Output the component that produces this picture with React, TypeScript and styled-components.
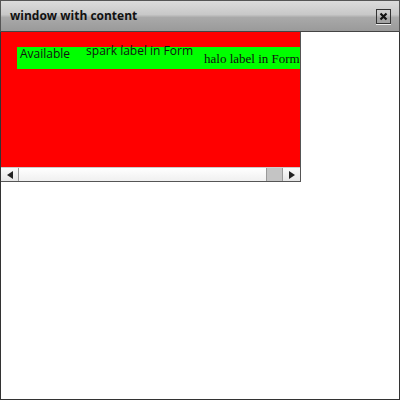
import React from "react";
import styled, { createGlobalStyle } from "styled-components";

const Global = createGlobalStyle`
  html, body { margin: 0; padding: 0; background: #fff; }
  #root { width: 400px; height: 400px; }
`;

const Window = styled.div`
  box-sizing: border-box;
  width: 400px;
  height: 400px;
  border: 1px solid #333;
  border-top: none;
  display: flex;
  flex-direction: column;
  background: #fff;
`;

const TitleBar = styled.div`
  box-sizing: border-box;
  height: 32px;
  flex: none;
  display: flex;
  align-items: center;
  justify-content: space-between;
  padding: 0 8px 0 9px;
  background: linear-gradient(#dcdcdc, #c8c8c8 45%, #a9a9a9 55%, #9a9a9a);
  border-top: 1px solid #555;
  border-bottom: 1px solid #444;
  margin: 0 -1px;
  border-left: 1px solid #555;
  border-right: 1px solid #555;
`;

const Title = styled.span`
  font-family: "Open Sans", sans-serif;
  font-weight: 700;
  font-size: 12px;
  color: #111;
  margin-top: -1px;
`;

const CloseButton = styled.div`
  box-sizing: border-box;
  width: 15px;
  height: 15px;
  border: 1px solid #333;
  display: flex;
  align-items: center;
  justify-content: center;
  box-shadow: 0 1px 0 #eee;
`;

const Scroller = styled.div`
  width: 299px;
  display: flex;
  flex-direction: column;
  border-right: 1px solid #555;
  border-bottom: 1px solid #555;
`;

const Viewport = styled.div`
  height: 135px;
  background: #ff0000;
  overflow: hidden;
  padding: 15px 0 0 16px;
  box-sizing: border-box;
`;

const Row = styled.div`
  display: flex;
  align-items: flex-start;
  height: 22px;
  width: 320px;
  background: #00ff00;
  white-space: nowrap;
`;

const Label = styled.span<{ $x: number; $y: number; $serif?: boolean }>`
  margin-left: ${(p) => p.$x}px;
  margin-top: ${(p) => p.$y}px;
  font-family: ${(p) => (p.$serif ? '"Liberation Serif", serif' : '"Open Sans", sans-serif')};
  font-size: ${(p) => (p.$serif ? 13 : 12)}px;
  line-height: 1;
  color: #111;
`;

const ScrollBar = styled.div`
  height: 14px;
  display: flex;
  box-sizing: border-box;
  border-top: 1px solid #ccc;
  background: linear-gradient(#fff, #f0f0f0);
`;

const ArrowButton = styled.div<{ $right?: boolean }>`
  width: 17px;
  display: flex;
  align-items: center;
  justify-content: center;
  background: linear-gradient(#fafafa, #e6e6e6);
  border-left: ${(p) => (p.$right ? "1px solid #999" : "none")};
  border-right: ${(p) => (p.$right ? "none" : "1px solid #999")};
`;

const Track = styled.div`
  flex: 1;
  display: flex;
  justify-content: flex-end;
`;

const Thumb = styled.div`
  width: 15px;
  background: #c4c4c4;
  border-left: 1px solid #999;
`;

export default function App() {
  return (
    <>
      <Global />
      <Window>
        <TitleBar>
          <Title>window with content</Title>
          <CloseButton>
            <svg width="9" height="9" viewBox="0 0 9 9">
              <path d="M1.5 1.5 L7.5 7.5 M7.5 1.5 L1.5 7.5" stroke="#111" strokeWidth="2.2" />
            </svg>
          </CloseButton>
        </TitleBar>
        <Scroller>
          <Viewport>
            <Row>
              <Label $x={3} $y={1}>Available</Label>
              <Label $x={16} $y={-2}>spark label in Form</Label>
              <Label $x={11} $y={5} $serif>halo label in Form</Label>
            </Row>
          </Viewport>
          <ScrollBar>
            <ArrowButton>
              <svg width="8" height="8" viewBox="0 0 8 8"><path d="M1 4 L7 0 L7 8 Z" fill="#222" /></svg>
            </ArrowButton>
            <Track>
              <Thumb />
            </Track>
            <ArrowButton $right>
              <svg width="8" height="8" viewBox="0 0 8 8"><path d="M7 4 L1 0 L1 8 Z" fill="#222" /></svg>
            </ArrowButton>
          </ScrollBar>
        </Scroller>
      </Window>
    </>
  );
}
